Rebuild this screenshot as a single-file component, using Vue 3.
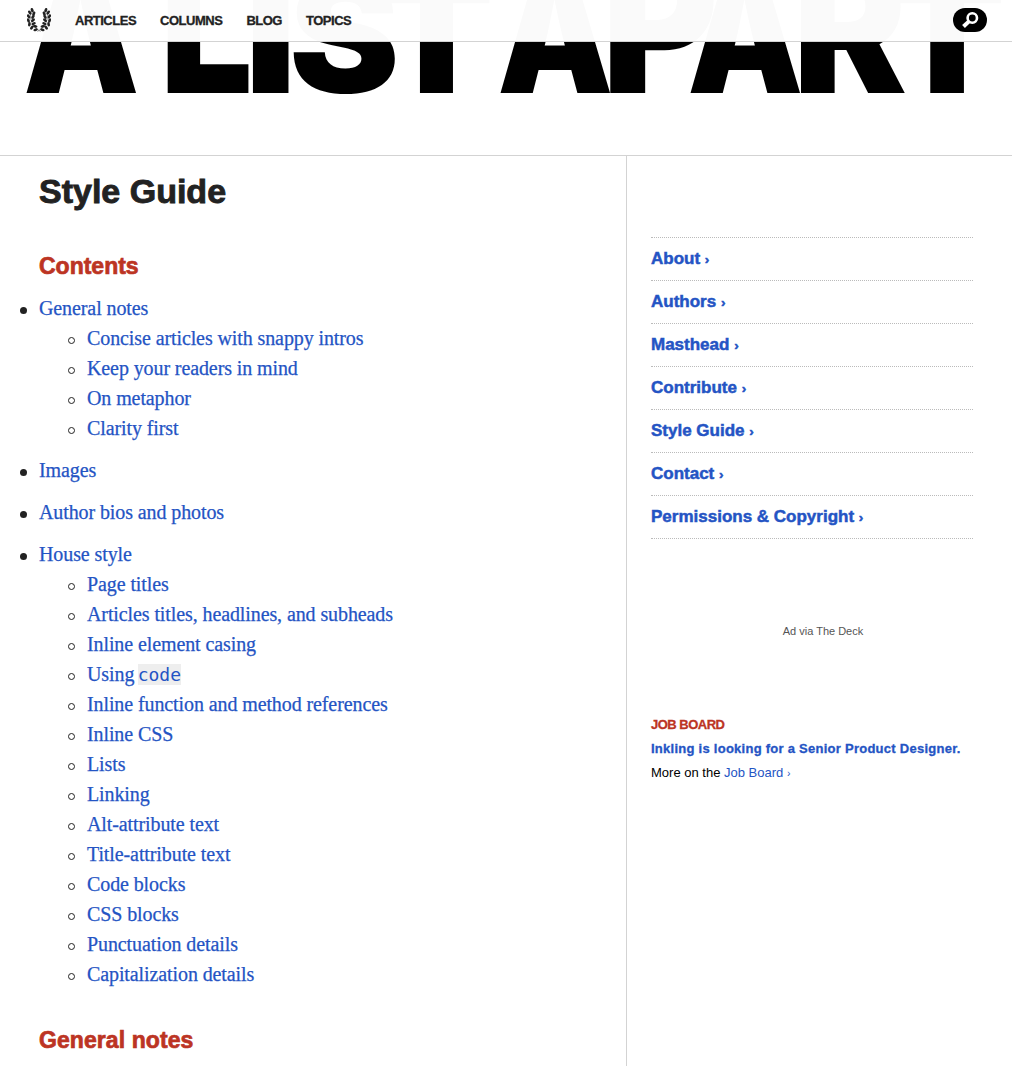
<script setup>
const nav = ['Articles', 'Columns', 'Blog', 'Topics']

// character, x offset, horizontal scale, vertical scale
const wordmark = [
  ['A', 23.3, 0.924, 1.05], ['L', 160, 1.04, 1.14], ['I', 244.6, 1.14, 1], ['S', 289, 1.05, 1], ['T', 379, 1.06, 1],
  ['A', 497.3, 0.924, 1.05], ['P', 602, 1.12, 1.25], ['A', 687.3, 0.924, 1.05], ['R', 793, 1.08, 1.15], ['T', 888.6, 1.08, 1],
]

const toc = [
  { label: 'General notes', children: ['Concise articles with snappy intros', 'Keep your readers in mind', 'On metaphor', 'Clarity first'] },
  { label: 'Images' },
  { label: 'Author bios and photos' },
  {
    label: 'House style',
    children: [
      'Page titles', 'Articles titles, headlines, and subheads', 'Inline element casing', 'Using |code',
      'Inline function and method references', 'Inline CSS', 'Lists', 'Linking', 'Alt-attribute text',
      'Title-attribute text', 'Code blocks', 'CSS blocks', 'Punctuation details', 'Capitalization details',
    ],
  },
]
const pages = ['About', 'Authors', 'Masthead', 'Contribute', 'Style Guide', 'Contact', 'Permissions & Copyright']

// x, y, tilt of each leaf on the left branch
const leaves = [
  [5.2, 2.2, 20], [2.8, 4.6, 40], [6.8, 5.6, -25], [1.6, 8.4, 30], [6, 8.8, -35], [1.4, 12.4, 15], [6, 12.2, -50],
  [2.4, 16.2, -10], [6.6, 15.6, -65], [4.8, 19.6, -40], [8.2, 18.4, 80], [8.6, 21.8, -70],
]
</script>

<template>
  <div class="page">
    <header class="bar">
      <svg class="laurel" viewBox="0 0 24 24">
        <g v-for="side in [1, -1]" :key="side" :transform="side === 1 ? '' : 'translate(24 0) scale(-1 1)'">
          <path d="M4.500 2C2.500 9 3 17 13.500 23.500" />
          <ellipse v-for="(l, i) in leaves" :key="i" :cx="l[0]" :cy="l[1]" rx="1.350" ry="2.300" :transform="`rotate(${-l[2]} ${l[0]} ${l[1]})`" />
        </g>
      </svg>
      <nav class="nav"><a v-for="n in nav" :key="n">{{ n }}</a></nav>
      <button class="search" aria-label="Search">
        <svg viewBox="0 0 34 24"><circle cx="19.300" cy="10" r="4.700" /><path d="M15.700 13.600L10.500 18.500" /></svg>
      </button>
    </header>

    <div class="masthead">
      <svg class="wordmark" viewBox="0 0 1012 155" aria-label="A List Apart">
        <text v-for="(g, i) in wordmark" :key="i" :transform="`translate(${g[1]} 93) scale(${g[2]} ${g[3]})`">{{ g[0] }}</text>
      </svg>
    </div>

    <div class="columns">
      <main class="main">
        <h1>Style Guide</h1>
        <h2>Contents</h2>
        <ul class="toc">
          <li v-for="s in toc" :key="s.label">
            <a>{{ s.label }}</a>
            <ul v-if="s.children" class="sub">
              <li v-for="c in s.children" :key="c"><a>{{ c.split('|')[0] }}<code v-if="c.includes('|')">{{ c.split('|')[1] }}</code></a></li>
            </ul>
          </li>
        </ul>
        <h2 class="next">General notes</h2>
      </main>
      <aside class="side">
        <ul class="pages">
          <li v-for="p in pages" :key="p"><a>{{ p }} <span class="chev">›</span></a></li>
        </ul>
        <p class="ad"><a>Ad via The Deck</a></p>
        <h3>Job Board</h3>
        <p class="job"><a>Inkling is looking for a Senior Product Designer.</a></p>
        <p class="more"><span>More on the </span><a>Job Board <span class="chev">›</span></a></p>
      </aside>
    </div>
  </div>
</template>

<style>
body { margin: 0; background: #fff; }
</style>

<style scoped>
.page { position: relative; height: 1066px; overflow: hidden; color: #222; font-family: 'Liberation Sans', Arial, sans-serif; display: flex; flex-direction: column; }
ul { list-style: none; margin: 0; padding: 0; }
p { margin: 0; }
a { color: #2454c4; text-decoration: none; }
.bar { position: absolute; top: 0; left: 0; right: 0; height: 40px; padding: 0 25px 1px 27px; border-bottom: 1px solid #d3d3d3; background: rgba(255, 255, 255, .982); display: flex; align-items: center; z-index: 2; }
.laurel { width: 24px; height: 24px; margin-right: 24px; fill: #222; }
.laurel path { fill: none; stroke: #555; stroke-width: .6; }
.nav { display: flex; gap: 24px; flex: 1; }
.nav a { color: #222; font-weight: bold; font-size: 13px; letter-spacing: -.49px; text-transform: uppercase; -webkit-text-stroke: .3px #222; }
.search { width: 34px; height: 24px; border: 0; padding: 0; border-radius: 12px; background: #000; }
.search svg { display: block; width: 34px; height: 24px; fill: none; stroke: #fff; stroke-width: 2.600; }
.search path { stroke-width: 4; }
.masthead { height: 155px; border-bottom: 1px solid #d3d3d3; flex: none; }
.wordmark { display: block; width: 1012px; height: 155px; }
.wordmark text { font-family: Inter, sans-serif; font-weight: 900; font-size: 158px; fill: #000; }
.columns { display: flex; flex: 1; }
.main { width: 587px; padding-left: 39px; border-right: 1px solid #d3d3d3; }
h1 { margin: 14px 0 0; font-size: 34px; line-height: 42px; -webkit-text-stroke: .9px #222; }
h2 { margin: 39px 0 0; font-size: 23px; line-height: 30px; color: #bc3423; -webkit-text-stroke: .7px #bc3423; }
h2.next { margin-top: 36px; letter-spacing: .08px; }
.toc { margin-top: 12px; font-family: 'Liberation Serif', 'Times New Roman', serif; font-size: 20px; line-height: 30px; letter-spacing: -.1px; -webkit-text-stroke: .25px #2454c4; }
.toc > li { margin-bottom: 12px; position: relative; }
.toc li::before { content: ''; position: absolute; left: -19px; top: 14px; width: 7px; height: 7px; border-radius: 50%; background: #222; }
.sub { padding-left: 48px; }
.sub li { position: relative; height: 30px; }
.toc .sub li::before { background: none; border: 1px solid #222; width: 5px; height: 5px; }
code { font: 18px/21px 'DejaVu Sans Mono', monospace; letter-spacing: 0; background: #eee; -webkit-text-stroke: 0; margin-left: -1.500px; }
.side { flex: 1; padding: 81px 39px 0 24px; }
.pages { border-top: 1px dotted #bbb; }
.pages li { height: 42px; line-height: 41px; border-bottom: 1px dotted #bbb; font-weight: bold; font-size: 17px; -webkit-text-stroke: .5px #2454c4; }
.chev { font-size: .8em; }
.ad { text-align: center; margin-top: 82px; padding-left: 22px; font-size: 11px; line-height: 20px; }
.ad a { color: #555; }
h3 { margin: 72px 0 0; font-size: 13px; line-height: 24px; letter-spacing: -.5px; color: #bc3423; text-transform: uppercase; -webkit-text-stroke: .3px #bc3423; }
.job { font-weight: bold; font-size: 13px; line-height: 24px; letter-spacing: .26px; -webkit-text-stroke: .3px #2454c4; }
.more { font-size: 13px; line-height: 24px; color: #000; white-space: pre; }
</style>
